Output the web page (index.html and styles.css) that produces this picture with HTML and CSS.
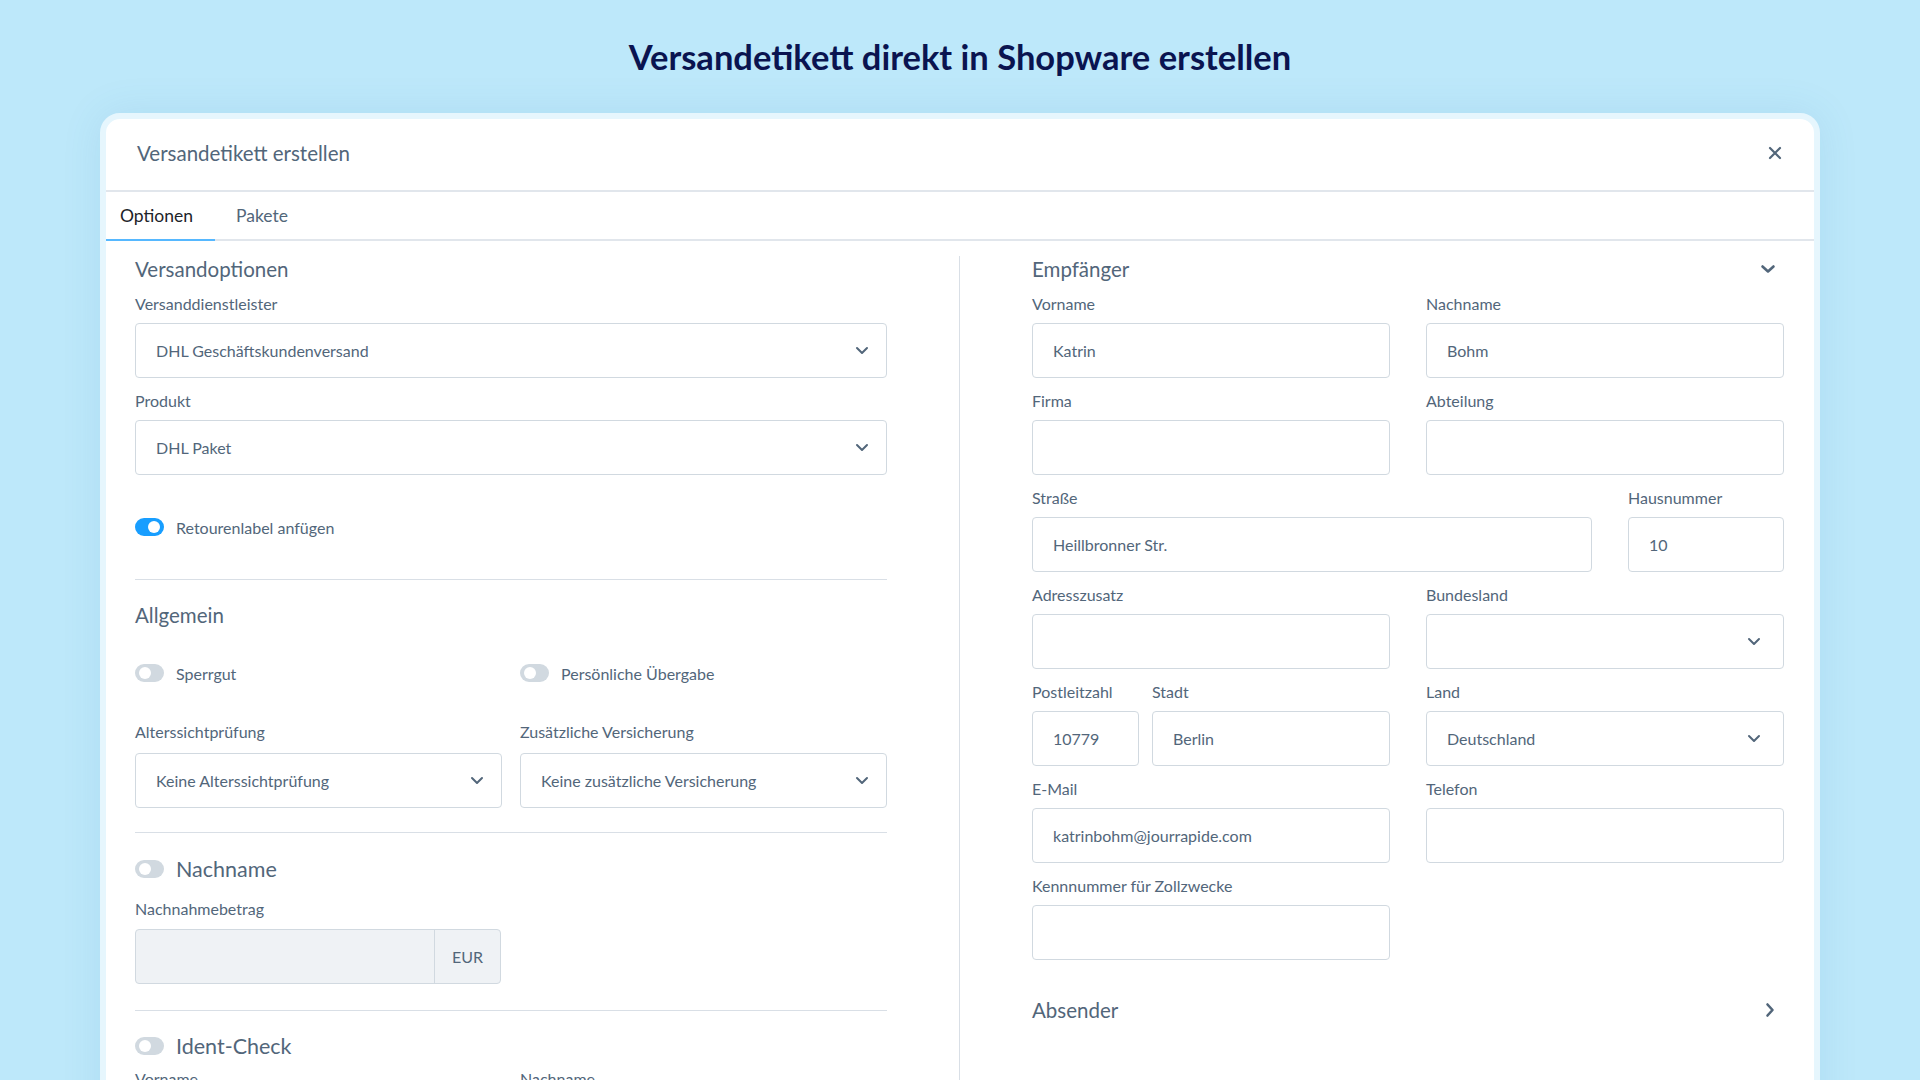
FILE: index.html
```html
<!DOCTYPE html>
<html lang="de">
<head>
<meta charset="utf-8">
<title>Versandetikett direkt in Shopware erstellen</title>
<link rel="stylesheet" href="styles.css">
</head>
<body>
<h1 class="page-title">Versandetikett direkt in Shopware erstellen</h1>

<div class="modal">
  <div class="modal-header">
    <span class="modal-title">Versandetikett erstellen</span>
    <span class="close-btn">
      <svg width="14" height="14" viewBox="0 0 14 14"><path d="M2 2L12 12M12 2L2 12" stroke="#52667a" stroke-width="2.2" stroke-linecap="round"/></svg>
    </span>
  </div>

  <div class="tabs">
    <div class="tab active">Optionen</div>
    <div class="tab">Pakete</div>
  </div>

  <div class="modal-body">
    <div class="col">
      <h3 class="section-title">Versandoptionen</h3>

      <div class="field">
        <div class="label">Versanddienstleister</div>
        <div class="input select">
          <span>DHL Geschäftskundenversand</span>
          <svg class="chev" width="14" height="9" viewBox="0 0 14 9"><path d="M2 2l5 5 5-5" fill="none" stroke="#52667a" stroke-width="2" stroke-linecap="round" stroke-linejoin="round"/></svg>
        </div>
      </div>

      <div class="field">
        <div class="label">Produkt</div>
        <div class="input select">
          <span>DHL Paket</span>
          <svg class="chev" width="14" height="9" viewBox="0 0 14 9"><path d="M2 2l5 5 5-5" fill="none" stroke="#52667a" stroke-width="2" stroke-linecap="round" stroke-linejoin="round"/></svg>
        </div>
      </div>

      <div class="toggle-row first-toggle">
        <span class="switch on"></span>
        <span class="toggle-label">Retourenlabel anfügen</span>
      </div>

      <div class="divider"></div>

      <h3 class="section-title allgemein">Allgemein</h3>

      <div class="two-grid toggles">
        <div class="toggle-row">
          <span class="switch"></span>
          <span class="toggle-label">Sperrgut</span>
        </div>
        <div class="toggle-row">
          <span class="switch"></span>
          <span class="toggle-label">Persönliche Übergabe</span>
        </div>
      </div>

      <div class="two-grid selects">
        <div class="field plain">
          <div class="label">Alterssichtprüfung</div>
          <div class="input select">
            <span>Keine Alterssichtprüfung</span>
            <svg class="chev" width="14" height="9" viewBox="0 0 14 9"><path d="M2 2l5 5 5-5" fill="none" stroke="#52667a" stroke-width="2" stroke-linecap="round" stroke-linejoin="round"/></svg>
          </div>
        </div>
        <div class="field plain">
          <div class="label">Zusätzliche Versicherung</div>
          <div class="input select">
            <span>Keine zusätzliche Versicherung</span>
            <svg class="chev" width="14" height="9" viewBox="0 0 14 9"><path d="M2 2l5 5 5-5" fill="none" stroke="#52667a" stroke-width="2" stroke-linecap="round" stroke-linejoin="round"/></svg>
          </div>
        </div>
      </div>

      <div class="divider d2"></div>

      <div class="toggle-row big nachname">
        <span class="switch"></span>
        <span class="toggle-label">Nachname</span>
      </div>

      <div class="field plain cod">
        <div class="label">Nachnahmebetrag</div>
        <div class="input-group">
          <div class="group-input"></div>
          <div class="group-addon">EUR</div>
        </div>
      </div>

      <div class="divider d3"></div>

      <div class="toggle-row big ident">
        <span class="switch"></span>
        <span class="toggle-label">Ident-Check</span>
      </div>

      <div class="two-grid ident-fields">
        <div class="label">Vorname</div>
        <div class="label">Nachname</div>
      </div>
    </div>

    <div class="col-divider"></div>

    <div class="col">
      <div class="section-head">
        <h3 class="section-title">Empfänger</h3>
        <svg width="16" height="10" viewBox="0 0 16 10"><path d="M2.5 2.5l5.5 5 5.5-5" fill="none" stroke="#52667a" stroke-width="2.6" stroke-linecap="round" stroke-linejoin="round"/></svg>
      </div>

      <div class="r-grid">
        <div class="field">
          <div class="label">Vorname</div>
          <div class="input">Katrin</div>
        </div>
        <div class="field">
          <div class="label">Nachname</div>
          <div class="input">Bohm</div>
        </div>
      </div>

      <div class="r-grid">
        <div class="field">
          <div class="label">Firma</div>
          <div class="input"></div>
        </div>
        <div class="field">
          <div class="label">Abteilung</div>
          <div class="input"></div>
        </div>
      </div>

      <div class="r-grid street">
        <div class="field">
          <div class="label">Straße</div>
          <div class="input">Heillbronner Str.</div>
        </div>
        <div class="field">
          <div class="label">Hausnummer</div>
          <div class="input">10</div>
        </div>
      </div>

      <div class="r-grid">
        <div class="field">
          <div class="label">Adresszusatz</div>
          <div class="input"></div>
        </div>
        <div class="field">
          <div class="label">Bundesland</div>
          <div class="input select wide-chev">
            <span></span>
            <svg class="chev" width="14" height="9" viewBox="0 0 14 9"><path d="M2 2l5 5 5-5" fill="none" stroke="#52667a" stroke-width="2" stroke-linecap="round" stroke-linejoin="round"/></svg>
          </div>
        </div>
      </div>

      <div class="r-grid">
        <div class="plz-grid">
          <div class="field">
            <div class="label">Postleitzahl</div>
            <div class="input">10779</div>
          </div>
          <div class="field">
            <div class="label">Stadt</div>
            <div class="input">Berlin</div>
          </div>
        </div>
        <div class="field">
          <div class="label">Land</div>
          <div class="input select wide-chev">
            <span>Deutschland</span>
            <svg class="chev" width="14" height="9" viewBox="0 0 14 9"><path d="M2 2l5 5 5-5" fill="none" stroke="#52667a" stroke-width="2" stroke-linecap="round" stroke-linejoin="round"/></svg>
          </div>
        </div>
      </div>

      <div class="r-grid">
        <div class="field">
          <div class="label">E-Mail</div>
          <div class="input">katrinbohm@jourrapide.com</div>
        </div>
        <div class="field">
          <div class="label">Telefon</div>
          <div class="input"></div>
        </div>
      </div>

      <div class="r-grid">
        <div class="field">
          <div class="label">Kennnummer für Zollzwecke</div>
          <div class="input"></div>
        </div>
      </div>

      <div class="section-head absender">
        <h3 class="section-title">Absender</h3>
        <svg width="10" height="16" viewBox="0 0 10 16"><path d="M2.5 2.5l5 5.5-5 5.5" fill="none" stroke="#52667a" stroke-width="2.6" stroke-linecap="round" stroke-linejoin="round"/></svg>
      </div>
    </div>
  </div>
</div>
</body>
</html>
```

FILE: styles.css
```css
* { box-sizing: border-box; }

html, body {
  margin: 0;
  padding: 0;
  height: 1080px;
  overflow: hidden;
}

body {
  background: #bde8fa;
  font-family: "Lato", "Noto Sans", sans-serif;
  color: #52667a;
}

.page-title {
  margin: 0;
  height: 113px;
  padding-top: 36px;
  text-align: center;
  font-size: 34.5px;
  line-height: 42px;
  font-weight: 700;
  color: #0a1450;
}

.modal {
  margin: 0 100px;
  height: 1100px;
  background: #ffffff;
  border: 6px solid #e6f6fd;
  border-radius: 20px 20px 0 0;
  box-shadow: 0 0 40px rgba(40, 120, 170, 0.10);
}

.modal-header {
  height: 73px;
  display: flex;
  align-items: center;
  justify-content: space-between;
  padding: 0 32px 0 31px;
  border-bottom: 2px solid #e1e6ec;
}

.modal-title {
  font-size: 20.5px;
  color: #52667a;
  margin-top: -4px;
}

.close-btn {
  display: flex;
  margin-top: -4px;
}

.tabs {
  display: flex;
  height: 49px;
  border-bottom: 2px solid #e1e6ec;
}

.tab {
  padding: 0 22px 0 14px;
  line-height: 47px;
  font-size: 17.5px;
  color: #52667a;
  margin-bottom: -2px;
  border-bottom: 2px solid transparent;
}

.tab + .tab {
  padding-left: 21px;
}

.tab.active {
  color: #1d2329;
  border-bottom-color: #56b8ff;
}

.modal-body {
  display: grid;
  grid-template-columns: 1fr 1px 1fr;
  column-gap: 72px;
  padding: 15px 30px 0 29px;
}

.col-divider {
  background: #d9dfe6;
  height: 900px;
}

.section-title {
  margin: 0 0 11px;
  font-size: 20.5px;
  line-height: 26px;
  font-weight: 400;
  color: #52667a;
}

.label {
  font-size: 16px;
  line-height: 22px;
  margin-bottom: 8px;
  color: #52667a;
  white-space: nowrap;
}

.field {
  margin-bottom: 12px;
}

.field.plain {
  margin-bottom: 0;
}

.input {
  height: 55px;
  border: 1px solid #d1d9e0;
  border-radius: 4px;
  padding: 0 20px;
  display: flex;
  align-items: center;
  font-size: 16px;
  color: #52667a;
  background: #fff;
  white-space: nowrap;
}

.select {
  justify-content: space-between;
  padding-right: 17px;
}

.select.wide-chev {
  padding-right: 22px;
}

.toggle-row {
  display: flex;
  align-items: center;
  height: 24px;
}

.first-toggle {
  margin: 40px 0 40px;
}

.switch {
  position: relative;
  width: 29px;
  height: 18px;
  border-radius: 9px;
  background: #d1d9e0;
  flex: none;
}

.switch::after {
  content: "";
  position: absolute;
  top: 3px;
  left: 4px;
  width: 12px;
  height: 12px;
  border-radius: 50%;
  background: #fff;
}

.switch.on {
  background: #189eff;
}

.switch.on::after {
  left: 13px;
}

.toggle-label {
  margin-left: 12px;
  font-size: 16px;
  color: #52667a;
}

.toggle-row.big {
  height: 26px;
}

.toggle-row.big .toggle-label {
  font-size: 21.5px;
}

.divider {
  height: 1px;
  background: #d9dfe6;
}

.allgemein {
  margin-top: 22px;
  margin-bottom: 0;
}

.two-grid {
  display: grid;
  grid-template-columns: 1fr 1fr;
  column-gap: 18px;
}

.toggles {
  margin-top: 33px;
}

.selects {
  margin-top: 36px;
}

.selects .label {
  margin-bottom: 10px;
}

.d2 {
  margin-top: 24px;
}

.nachname {
  margin-top: 23px;
}

.cod {
  margin-top: 16px;
  width: 366px;
}

.cod .label {
  margin-bottom: 9px;
}

.input-group {
  display: flex;
  height: 55px;
  border: 1px solid #d1d9e0;
  border-radius: 4px;
  background: #eff2f5;
}

.group-input {
  flex: 1;
}

.group-addon {
  width: 66px;
  border-left: 1px solid #d1d9e0;
  display: flex;
  align-items: center;
  justify-content: center;
  font-size: 16px;
  color: #52667a;
}

.d3 {
  margin-top: 26px;
}

.ident {
  margin-top: 22px;
}

.ident-fields {
  margin-top: 9px;
}

.section-head {
  display: flex;
  align-items: center;
  justify-content: space-between;
  padding-right: 8px;
  margin-bottom: 11px;
}

.section-head .section-title {
  margin: 0;
}

.r-grid {
  display: grid;
  grid-template-columns: 1fr 1fr;
  column-gap: 36px;
}

.r-grid.street {
  grid-template-columns: 1fr 156px;
}

.plz-grid {
  display: grid;
  grid-template-columns: 107px 1fr;
  column-gap: 13px;
}

.absender {
  margin-top: 25px;
  padding-right: 9px;
}
```
